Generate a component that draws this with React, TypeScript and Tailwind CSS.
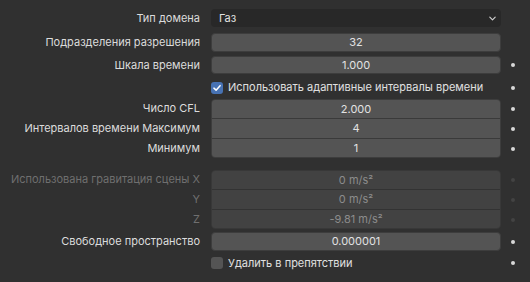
import type { ReactNode } from "react";

const font = { fontFamily: "Inter, 'Noto Sans', sans-serif" };

function Dot({ dim }: { dim?: boolean }) {
  return (
    <span
      className={[
        "ml-[10px] size-[4px] shrink-0 rounded-full",
        dim ? "bg-[#434343]" : "bg-[#d8d8d8]"
      ].join(" ")}
    />
  );
}

function Row({
  label,
  dim,
  h,
  children,
  dot,
  dotDim
}: {
  label?: string;
  dim?: boolean;
  h: string;
  children: ReactNode;
  dot?: boolean;
  dotDim?: boolean;
}) {
  return (
    <div className={["flex items-center", h].join(" ")}>
      <div
        className={[
          "w-[201px] shrink-0 whitespace-nowrap pr-px text-right",
          dim ? "text-[#6f6f6f]" : "text-[#dcdcdc]"
        ].join(" ")}
      >
        {label}
      </div>
      <div className="ml-[10px] flex h-full w-[290px] shrink-0 items-center">{children}</div>
      {dot ? <Dot dim={dotDim} /> : null}
    </div>
  );
}

function Check({ on, label }: { on?: boolean; label: string }) {
  return (
    <div className="flex items-center gap-[5px] whitespace-nowrap">
      <span
        className={[
          "flex size-[12px] items-center justify-center rounded-[3px]",
          on ? "bg-[#4772b3]" : "bg-[#545454]"
        ].join(" ")}
      >
        {on && (
          <svg viewBox="0 0 12 12" className="size-[10px]">
            <path d="M2.3 6.2 L4.9 8.6 L9.7 3.2" fill="none" stroke="#fff" strokeWidth="1.8" strokeLinecap="round" strokeLinejoin="round" />
          </svg>
        )}
      </span>
      <span className="text-[#e0e0e0]">{label}</span>
    </div>
  );
}

function Field({ value, h }: { value: string; h: string }) {
  return (
    <div
      className={[
        "flex w-full items-center justify-center rounded-[4px] border border-[#3d3d3d] bg-[#545454] text-[#e2e2e2]",
        h
      ].join(" ")}
    >
      {value}
    </div>
  );
}

type GroupRow = { label: string; value: string };

function Group({ rows, dim }: { rows: GroupRow[]; dim?: boolean }) {
  return (
    <div className="flex">
      <div className="w-[201px] shrink-0">
        {rows.map((r, i) => (
          <div
            key={r.label}
            className={[
              "flex h-[19px] items-center justify-end whitespace-nowrap pr-px",
              i > 0 ? "mt-px" : "",
              dim ? "text-[#6f6f6f]" : "text-[#dcdcdc]"
            ].join(" ")}
          >
            {r.label}
          </div>
        ))}
      </div>
      <div
        className={[
          "ml-[10px] w-[290px] shrink-0 overflow-hidden rounded-[4px] border",
          dim ? "border-[#383838] bg-[#333333]" : "border-[#3d3d3d] bg-[#3a3a3a]"
        ].join(" ")}
      >
        {rows.map((r, i) => (
          <div
            key={r.label}
            className={[
              "flex items-center justify-center",
              i === 0 || i === rows.length - 1 ? "h-[18px]" : "h-[19px]",
              i > 0 ? "mt-px" : "",
              dim ? "bg-[#424242] text-[#8c8c8c]" : "bg-[#545454] text-[#e2e2e2]"
            ].join(" ")}
          >
            {r.value}
          </div>
        ))}
      </div>
      <div className="flex flex-col">
        {rows.map((r, i) => (
          <div key={r.label} className={["flex h-[19px] items-center", i > 0 ? "mt-px" : ""].join(" ")}>
            <Dot dim={dim} />
          </div>
        ))}
      </div>
    </div>
  );
}

export default function App() {
  return (
    <div className="h-[282px] w-[530px] overflow-hidden bg-[#303030] pt-[9px] text-[11px] leading-none" style={font}>
      <Row label="Тип домена" h="h-[18px]">
        <div className="flex h-full w-full items-center justify-between rounded-[4px] bg-[#282828] pl-[8px] pr-[4px] text-[#e2e2e2]">
          <span>Газ</span>
          <svg viewBox="0 0 10 10" className="size-[9px]">
            <path d="M2 3.5 L5 6.5 L8 3.5" fill="none" stroke="#cfcfcf" strokeWidth="1.3" strokeLinecap="round" strokeLinejoin="round" />
          </svg>
        </div>
      </Row>
      <div className="mt-[6px]">
        <Row label="Подразделения разрешения" h="h-[19px]">
          <Field value="32" h="h-[19px]" />
        </Row>
      </div>
      <div className="mt-[4px]">
        <Row label="Шкала времени" h="h-[18px]" dot>
          <Field value="1.000" h="h-[18px]" />
        </Row>
      </div>
      <div className="mt-[3px]">
        <Row h="h-[21px]" dot>
          <Check on label="Использовать адаптивные интервалы времени" />
        </Row>
      </div>
      <div className="mt-[1px]">
        <Group
          rows={[
            { label: "Число CFL", value: "2.000" },
            { label: "Интервалов времени Максимум", value: "4" },
            { label: "Минимум", value: "1" }
          ]}
        />
      </div>
      <div className="mt-[12px]">
        <Group
          dim
          rows={[
            { label: "Использована гравитация сцены X", value: "0 m/s²" },
            { label: "Y", value: "0 m/s²" },
            { label: "Z", value: "-9.81 m/s²" }
          ]}
        />
      </div>
      <div className="mt-[3px]">
        <Row label="Свободное пространство" h="h-[19px]" dot>
          <Field value="0.000001" h="h-[19px]" />
        </Row>
      </div>
      <div className="mt-[2px]">
        <Row h="h-[20px]" dot>
          <Check label="Удалить в препятствии" />
        </Row>
      </div>
    </div>
  );
}
